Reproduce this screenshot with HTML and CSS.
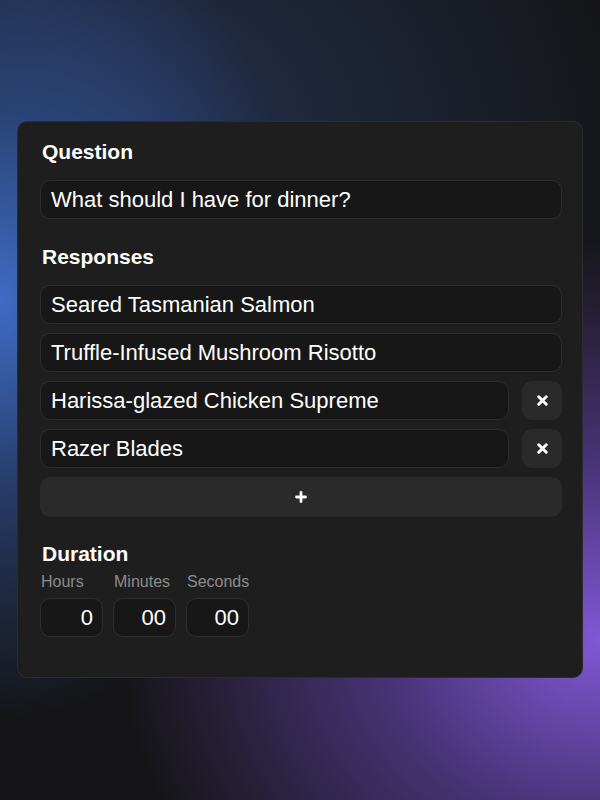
FILE: index.html
```html
<!DOCTYPE html>
<html>
<head>
<meta charset="utf-8">
<link rel="stylesheet" href="styles.css">
</head>
<body>
<div class="page">
  <div class="card">
    <div class="label">Question</div>
    <div class="field">What should I have for dinner?</div>

    <div class="label section">Responses</div>
    <div class="list">
      <div class="field">Seared Tasmanian Salmon</div>
      <div class="field">Truffle-Infused Mushroom Risotto</div>
      <div class="row">
        <div class="field grow">Harissa-glazed Chicken Supreme</div>
        <div class="btn sq"><svg width="11" height="11" viewBox="0 0 10 10"><path d="M1.6 1.6L8.4 8.4M8.4 1.6L1.6 8.4" stroke="#fff" stroke-width="2.7" stroke-linecap="round"/></svg></div>
      </div>
      <div class="row">
        <div class="field grow">Razer Blades</div>
        <div class="btn sq"><svg width="11" height="11" viewBox="0 0 10 10"><path d="M1.6 1.6L8.4 8.4M8.4 1.6L1.6 8.4" stroke="#fff" stroke-width="2.7" stroke-linecap="round"/></svg></div>
      </div>
      <div class="btn wide"><svg width="12" height="12" viewBox="0 0 12 12"><path d="M6 1.5V10.5M1.5 6H10.5" stroke="#fff" stroke-width="2.8" stroke-linecap="round"/></svg></div>
    </div>

    <div class="label section2">Duration</div>
    <div class="duration">
      <div class="col">
        <div class="sub">Hours</div>
        <div class="field num">0</div>
      </div>
      <div class="col">
        <div class="sub">Minutes</div>
        <div class="field num">00</div>
      </div>
      <div class="col">
        <div class="sub">Seconds</div>
        <div class="field num">00</div>
      </div>
    </div>
  </div>
</div>
</body>
</html>
```
FILE: styles.css
```css
html, body {
  margin: 0;
  padding: 0;
}
body {
  width: 600px;
  height: 800px;
  overflow: hidden;
  font-family: "Liberation Sans", Arial, sans-serif;
  color: #fff;
  background-color: #151517;
  background-image:
    radial-gradient(ellipse 300px 420px at 0px 300px, rgba(62,108,196,1), rgba(48,82,150,0.6) 45%, rgba(30,40,70,0) 100%),
    radial-gradient(ellipse 480px 400px at 600px 640px, rgba(128,88,212,1), rgba(92,64,158,0.7) 45%, rgba(50,35,80,0) 100%),
    radial-gradient(ellipse 520px 420px at 120px 140px, rgba(42,62,104,0.7), rgba(30,40,60,0) 100%);
}
.page {
  padding: 121px 17px 0 17px;
}
.card {
  box-sizing: border-box;
  width: 566px;
  height: 557px;
  background: #1e1e1e;
  border: 1px solid #2c2c2c;
  border-radius: 10px;
  padding: 18px 20px 0 22px;
}
.label {
  font-size: 21px;
  font-weight: bold;
  line-height: 24px;
  margin: 0 0 16px 2px;
}
.label.section {
  margin-top: 26px;
}
.label.section2 {
  margin-top: 25px;
  margin-bottom: 7px;
}
.field {
  box-sizing: border-box;
  height: 39px;
  background: #171717;
  border: 1px solid #2e2e2e;
  border-radius: 10px;
  font-size: 22px;
  line-height: 37px;
  padding: 0 10px;
  white-space: nowrap;
}
.list {
  display: flex;
  flex-direction: column;
  gap: 9px;
}
.row {
  display: flex;
  gap: 13px;
}
.grow {
  flex: 1;
}
.btn {
  box-sizing: border-box;
  background: #2a2a2a;
  border-radius: 10px;
  display: flex;
  align-items: center;
  justify-content: center;
}
.btn svg {
  display: block;
}
.sq {
  width: 40px;
  height: 39px;
}
.wide {
  height: 40px;
}
.duration {
  display: flex;
  gap: 10px;
}
.col {
  display: flex;
  flex-direction: column;
  gap: 7px;
}
.sub {
  font-size: 16px;
  line-height: 18px;
  color: #8c8c8c;
  padding-left: 1px;
}
.num {
  width: 63px;
  text-align: right;
  padding-right: 9px;
}
```
